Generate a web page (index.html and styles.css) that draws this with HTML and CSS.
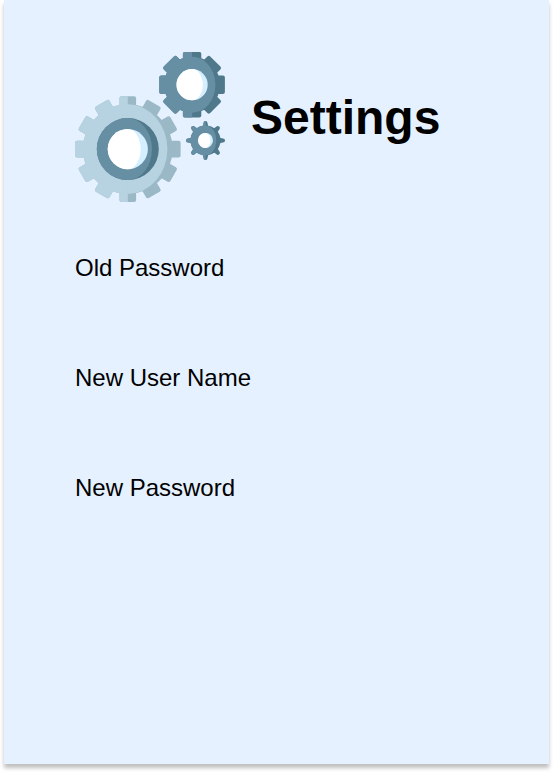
FILE: index.html
```html
<!DOCTYPE html>
<html lang="en">
<head>
<meta charset="utf-8">
<title>Settings</title>
<link rel="stylesheet" href="styles.css">
</head>
<body>
<main class="panel">
  <header class="header">
    <svg class="gears" viewBox="0 0 150 150" aria-hidden="true">
      <defs>
        <rect id="tooth-lg" x="-8.3" y="-52.8" width="16.6" height="30" rx="2"/>
        <rect id="tooth-md" x="-9.2" y="-32.8" width="18.4" height="20" rx="2"/>
        <path id="tooth-sm" d="M-4-13.5Q-2-14.5-2-17.5A2 2 0 0 1 2-17.5Q2-14.5 4-13.5Z"/>
        <g id="gear-lg">
          <circle r="44.8"/>
          <use href="#tooth-lg"/><use href="#tooth-lg" transform="rotate(30)"/><use href="#tooth-lg" transform="rotate(60)"/><use href="#tooth-lg" transform="rotate(90)"/><use href="#tooth-lg" transform="rotate(120)"/><use href="#tooth-lg" transform="rotate(150)"/><use href="#tooth-lg" transform="rotate(180)"/><use href="#tooth-lg" transform="rotate(210)"/><use href="#tooth-lg" transform="rotate(240)"/><use href="#tooth-lg" transform="rotate(270)"/><use href="#tooth-lg" transform="rotate(300)"/><use href="#tooth-lg" transform="rotate(330)"/>
        </g>
        <g id="gear-md">
          <circle r="28"/>
          <use href="#tooth-md"/><use href="#tooth-md" transform="rotate(45)"/><use href="#tooth-md" transform="rotate(90)"/><use href="#tooth-md" transform="rotate(135)"/><use href="#tooth-md" transform="rotate(180)"/><use href="#tooth-md" transform="rotate(225)"/><use href="#tooth-md" transform="rotate(270)"/><use href="#tooth-md" transform="rotate(315)"/>
        </g>
        <g id="gear-sm">
          <circle r="15"/>
          <use href="#tooth-sm"/><use href="#tooth-sm" transform="rotate(45)"/><use href="#tooth-sm" transform="rotate(90)"/><use href="#tooth-sm" transform="rotate(135)"/><use href="#tooth-sm" transform="rotate(180)"/><use href="#tooth-sm" transform="rotate(225)"/><use href="#tooth-sm" transform="rotate(270)"/><use href="#tooth-sm" transform="rotate(315)"/>
        </g>
        <clipPath id="left-half"><rect x="-60" y="-60" width="60" height="120"/></clipPath>
      </defs>
      <g transform="translate(52.8 97.1)">
        <use href="#gear-lg" class="pale-shade"/>
        <g clip-path="url(#left-half)"><use href="#gear-lg" class="pale"/></g>
        <path class="pale" d="M-.5-44.8H0A39.6 44.8 0 0 1 0 44.8H-.5Z"/>
        <circle class="steel-shade" r="31"/>
        <path class="steel" d="M0-31A31 31 0 0 0 0 31A24.2 31 0 0 0 0-31Z"/>
        <circle class="glass" r="20.1"/>
        <path class="white" d="M0-20.1A20.1 20.1 0 0 0 0 20.1A12.9 20.1 0 0 0 0-20.1Z"/>
      </g>
      <g transform="translate(117.1 32.7)">
        <use href="#gear-md" class="steel-shade"/>
        <g clip-path="url(#left-half)"><use href="#gear-md" class="steel"/></g>
        <path class="steel" d="M-.5-28H0A23.3 28 0 0 1 0 28H-.5Z"/>
        <circle class="glass" r="15.6"/>
        <path class="white" d="M0-15.6A15.6 15.6 0 0 0 0 15.6A10.7 15.6 0 0 0 0-15.6Z"/>
      </g>
      <g transform="translate(130.5 88.4)">
        <use href="#gear-sm" class="steel-shade"/>
        <g clip-path="url(#left-half)"><use href="#gear-sm" class="steel"/></g>
        <path class="steel" d="M-.5-15H0A10.7 15 0 0 1 0 15H-.5Z"/>
        <circle class="glass" r="7.5"/>
        <path class="white" d="M0-7.5A7.5 7.5 0 0 0 0 7.5A4.8 7.5 0 0 0 0-7.5Z"/>
      </g>
    </svg>
    <h1 class="title">Settings</h1>
  </header>
  <section class="fields">
    <p class="label">Old Password</p>
    <p class="label">New User Name</p>
    <p class="label">New Password</p>
  </section>
</main>
</body>
</html>
```
FILE: styles.css
```css
* { box-sizing: border-box; }

body {
  margin: 0;
  min-height: 772px;
  background: #fff;
  color: #000;
  font-family: "Liberation Sans", Arial, sans-serif;
}

.panel {
  width: 545px;
  height: 764px;
  margin: 0 4px;
  padding: 52px 71px 0;
  background: #e5f1ff;
  box-shadow: 0 4px 4px rgba(0, 0, 0, 0.25);
}

.header {
  display: flex;
  gap: 26px;
}

.gears {
  width: 150px;
  height: 150px;
}

.title {
  margin: 38px 0 0;
  font-size: 48px;
  font-weight: 700;
  line-height: 55px;
}

.fields {
  display: flex;
  flex-direction: column;
  gap: 83px;
  margin-top: 52px;
}

.label {
  margin: 0;
  font-size: 24px;
  line-height: 27px;
}

.pale { fill: #b7d3e1; }
.pale-shade { fill: #9ab8c6; }
.steel { fill: #678fa4; }
.steel-shade { fill: #4f788b; }
.glass { fill: #d4efff; }
.white { fill: #fff; }
```
